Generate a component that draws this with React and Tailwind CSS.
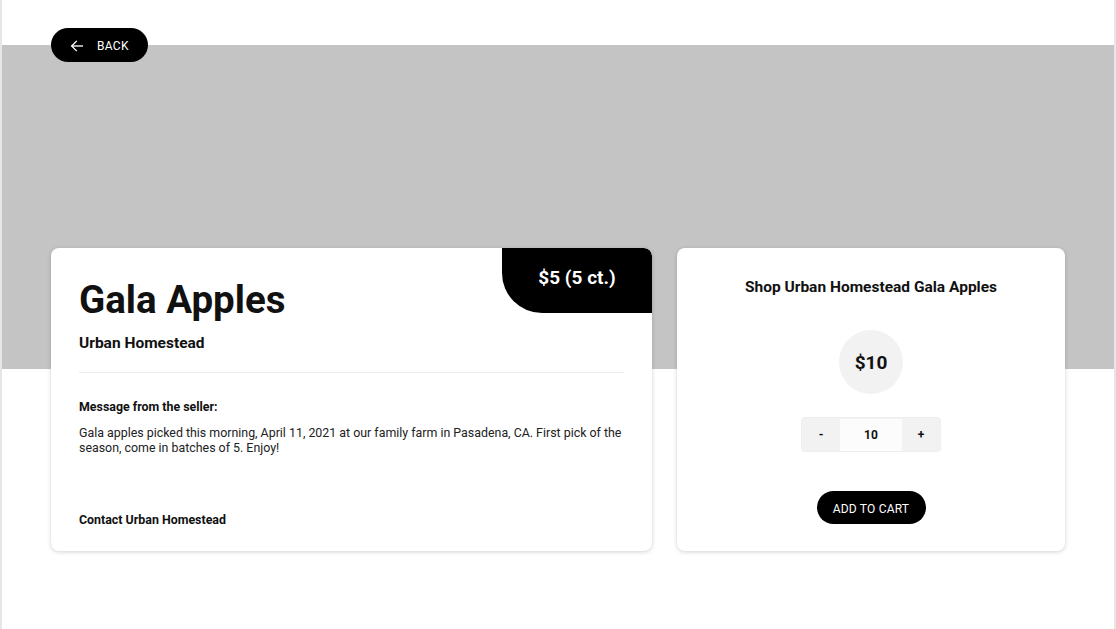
import { useState } from 'react';

function ArrowLeft() {
  return (
    <svg width="16" height="16" viewBox="0 0 24 24" fill="none" stroke="currentColor" strokeWidth="2" strokeLinecap="square">
      <path d="M20 12H5" />
      <path d="M11 5l-7 7 7 7" />
    </svg>
  );
}

export default function App() {
  const [qty, setQty] = useState(10);

  return (
    <div className="min-h-[629px] bg-white border-x-2 border-[#e6e6e6] font-['Roboto',sans-serif] text-[#111]">
      <div className="h-[45px] pt-[28px] px-[49px]">
        <button className="relative z-10 flex items-center gap-[12px] h-[34px] w-[97px] pl-[18px] pt-[1px] rounded-full bg-black text-white text-[12px] tracking-[0.3px]">
          <ArrowLeft />
          <span>BACK</span>
        </button>
      </div>
      <div className="h-[324px] bg-[#c4c4c4]" />

      <div className="-mt-[121px] px-[49px] flex gap-[25px]">
        <div className="relative w-[601px] h-[303px] bg-white rounded-lg shadow-[0_1px_4px_rgba(0,0,0,0.18)] overflow-hidden flex flex-col pl-[28px] pt-[30px] pb-[23px]">
          <div className="absolute top-0 right-0 w-[150px] h-[65px] bg-black rounded-bl-[40px] rounded-tr-lg flex items-center justify-center pb-[4px]">
            <span className="text-white text-[19px] font-bold">$5 (5 ct.)</span>
          </div>
          <h1 className="text-[38.5px] leading-[44px] font-bold">Gala Apples</h1>
          <h2 className="mt-[11px] text-[15.5px] leading-[20px] font-bold">Urban Homestead</h2>
          <div className="mt-[19px] mr-[28px] border-t border-[#ececec]" />
          <p className="mt-[26px] text-[12.4px] leading-[16px] font-bold">Message from the seller:</p>
          <p className="mt-[10px] mr-[24px] text-[12.4px] leading-[15px] text-[#222]">
            Gala apples picked this morning, April 11, 2021 at our family farm in Pasadena, CA. First pick of the season, come in batches of 5. Enjoy!
          </p>
          <p className="mt-auto text-[12.4px] leading-[16px] font-bold">Contact Urban Homestead</p>
        </div>

        <div className="flex-1 h-[303px] bg-white rounded-lg shadow-[0_1px_4px_rgba(0,0,0,0.18)] flex flex-col items-center pt-[29px]">
          <h3 className="text-[15.5px] leading-[20px] font-bold">Shop Urban Homestead Gala Apples</h3>
          <div className="mt-[33px] w-[64px] h-[64px] rounded-full bg-[#f2f2f2] flex items-center justify-center pt-[2px]">
            <span className="text-[19px] font-bold">$10</span>
          </div>
          <div className="mt-[23px] flex h-[35px] pt-[1px] rounded border border-[#eeeeee] overflow-hidden text-[12px] font-bold bg-[#f2f2f2]">
            <button className="w-[38px] bg-[#f2f2f2]" onClick={() => setQty(Math.max(0, qty - 1))}>-</button>
            <div className="w-[62px] bg-[#fcfcfc] flex items-center justify-center">{qty}</div>
            <button className="w-[38px] bg-[#f2f2f2]" onClick={() => setQty(qty + 1)}>+</button>
          </div>
          <button className="mt-[39px] h-[33px] w-[109px] pt-[2px] rounded-full bg-black text-white text-[12px] tracking-[0.2px]">
            ADD TO CART
          </button>
        </div>
      </div>
    </div>
  );
}
